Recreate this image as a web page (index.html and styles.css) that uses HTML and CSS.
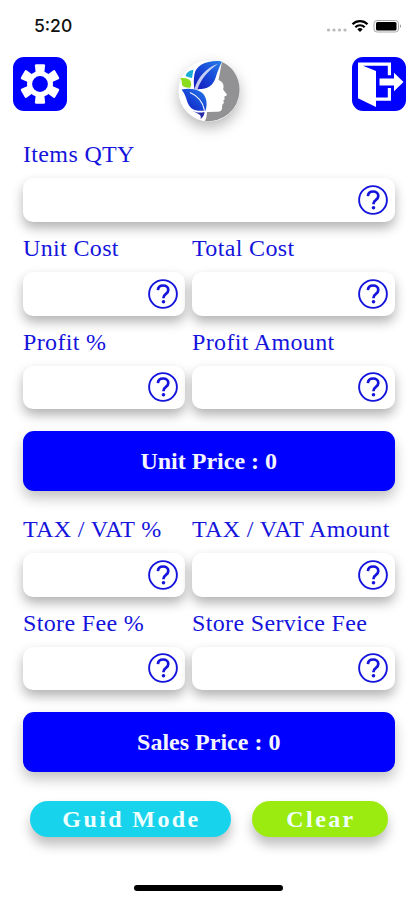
FILE: index.html
```
<!DOCTYPE html>
<html lang="en">
<head>
<meta charset="utf-8">
<meta name="viewport" content="width=device-width, initial-scale=1">
<title>Price Calculator</title>
<link rel="stylesheet" href="styles.css">
</head>
<body>
<svg class="defs" width="0" height="0" aria-hidden="true">
  <symbol id="help" viewBox="0 0 30 30">
    <circle cx="15" cy="15" r="13.9" fill="none" stroke="currentColor" stroke-width="1.9"/>
    <path d="M9.9 11.2C10.1 8.2 12 6.5 15.1 6.5c3 0 5.2 1.7 5.2 4.4 0 2-1.1 3.100-2.600 4.200-1.600 1.100-2.200 1.800-2.200 3.700v.5" fill="none" stroke="currentColor" stroke-width="2.700"/>
    <circle cx="15.500" cy="22.700" r="1.800" fill="currentColor"/>
  </symbol>
</svg>
<div class="status">
  <span class="time">5:20</span>
  <svg class="signals" width="76" height="18" viewBox="0 0 76 18">
    <g fill="#b8b8b8"><circle cx="2.500" cy="13" r="1.600"/><circle cx="8" cy="13" r="1.600"/><circle cx="13.500" cy="13" r="1.600"/><circle cx="19" cy="13" r="1.600"/></g>
    <g fill="none" stroke="#000" stroke-width="2.200"><path d="M26.500 7.200a10.500 10.500 0 0 1 15 0"/><path d="M29.300 10.200a6.600 6.600 0 0 1 9.400 0"/></g>
    <path d="M31.300 12.300a3.900 3.900 0 0 1 5.400 0L34 15z"/>
    <rect x="48" y="3.500" width="24.500" height="11.500" rx="3" fill="#fff" stroke="#aaa"/>
    <rect x="50" y="5" width="20.500" height="8.500" rx="1.500"/>
    <path d="M74 7.300q2 1.900 0 3.800z" fill="#888"/>
  </svg>
</div>
<header class="top">
  <div class="tile">
    <svg width="54" height="54" viewBox="0 0 54 54">
      <g fill="#fff">
        <circle cx="27" cy="27" r="13"/>
        <g id="teeth">
          <path id="tooth" d="M22.700 16 21.900 8.500q0-1.300 1.500-1.300h7.200q1.500 0 1.500 1.300L31.300 16z"/>
          <use href="#tooth" transform="rotate(60 27 27)"/><use href="#tooth" transform="rotate(120 27 27)"/>
          <use href="#tooth" transform="rotate(180 27 27)"/><use href="#tooth" transform="rotate(240 27 27)"/>
          <use href="#tooth" transform="rotate(300 27 27)"/>
        </g>
      </g>
      <circle cx="27" cy="27" r="7.900" fill="#00f"/>
    </svg>
  </div>
  <svg class="logo" width="64" height="64" viewBox="0 0 64 64">
    <defs><linearGradient id="leaf" x1="0" y1="1" x2="1" y2="0"><stop offset="0" stop-color="#1515b8"/><stop offset=".5" stop-color="#1748d8"/><stop offset="1" stop-color="#267de8"/></linearGradient></defs>
    <circle cx="32" cy="32" r="30.500" fill="#fff"/>
    <path d="M45 2.600A31 31 0 0 1 62.500 32 31 31 0 0 1 28 62q2-4 2-9l10-.200q4.500.200 5-3l.300-4 1.700-2-.800-2 1.500-1.500-.500-2.500 2.600-1.500c.8-1-2.500-3.500-3.700-6 1.500-4.500-.6-8-4.600-9.300z" fill="#929294"/>
    <path d="M45 2.200C30 .700 19 6 17.500 15c-1 6-.8 10.500-.1 15C29 31 35.500 28 38.500 19 40 14 42 9 45 2.200z" fill="url(#leaf)"/>
    <path d="M17.500 30C21 18 29 9 41 4.800 31 12 24 20 20.500 30.200z" fill="#fff" opacity=".75"/>
    <path d="M4.500 30.500C15 28.500 26 31 28.600 39c1.700 5 1 9 0 12.500-8 1.200-15-.5-17.600-7C9 39.500 8.300 35 4.500 30.500z" fill="url(#leaf)"/>
    <path d="M13 33.500c8 3.500 13 9.500 14.500 18" fill="none" stroke="#eef" stroke-width="1.300"/>
    <path d="M15 51.500c5 2.500 8.500 2.500 12.500 1.500q0 4-4 7 1.500-4-3-5.500z" fill="#252aa8"/>
    <path d="M3.500 19q8.500-.700 10.300 3.500 1 3.500-.500 6.300Q5 29 4.800 24.500 5 21.500 3.500 19z" fill="#8bdc1d"/>
    <path d="M8.500 17q1.500-5.500 8-6.200-.8 4-1.500 8.200-3.500-.5-6.500-2z" fill="#19abd8"/>
  </svg>
  <div class="tile">
    <svg width="54" height="54" viewBox="0 0 54 54">
      <path d="M6 5.500h33v12.800h-3.200V8.700H11L24 14v26.500h11.800v-9.600H39v12.800H24v6.300L6 41.300z" fill="#fff"/>
      <path d="M27.500 21.500H42v-5.700l9.500 9.200-9.500 9.200v-5.700H27.500z" fill="#fff"/>
    </svg>
  </div>
</header>
<main class="form">
  <label class="field"><span class="label qty">Items QTY</span><span class="box wide"><svg class="help"><use href="#help"/></svg></span></label>
  <div class="row">
    <label class="field"><span class="label">Unit Cost</span><span class="box"><svg class="help"><use href="#help"/></svg></span></label>
    <label class="field"><span class="label">Total Cost</span><span class="box"><svg class="help"><use href="#help"/></svg></span></label>
  </div>
  <div class="row">
    <label class="field"><span class="label">Profit %</span><span class="box"><svg class="help"><use href="#help"/></svg></span></label>
    <label class="field"><span class="label">Profit Amount</span><span class="box"><svg class="help"><use href="#help"/></svg></span></label>
  </div>
  <div class="total">Unit Price : 0</div>
  <div class="row">
    <label class="field"><span class="label tax">TAX / VAT %</span><span class="box"><svg class="help"><use href="#help"/></svg></span></label>
    <label class="field"><span class="label tax">TAX / VAT Amount</span><span class="box"><svg class="help"><use href="#help"/></svg></span></label>
  </div>
  <div class="row">
    <label class="field"><span class="label store">Store Fee %</span><span class="box"><svg class="help"><use href="#help"/></svg></span></label>
    <label class="field"><span class="label store">Store Service Fee</span><span class="box"><svg class="help"><use href="#help"/></svg></span></label>
  </div>
  <div class="total">Sales Price : 0</div>
</main>
<div class="actions">
  <button class="pill guide">Guid Mode</button>
  <button class="pill clear">Clear</button>
</div>
<div class="home"></div>
</body>
</html>
```
FILE: styles.css
```
* { box-sizing: border-box; }
body {
  margin: 0;
  height: 900px;
  overflow: hidden;
  background: #fff;
  font-family: "Liberation Serif", "Times New Roman", serif;
  color: #1414dc;
}
.defs { display: block; }
.status {
  height: 57px;
  padding: 15px 15px 0 34px;
  display: flex;
  justify-content: space-between;
  align-items: flex-start;
}
.time {
  font: 500 17.5px/22px Inter, sans-serif;
  color: #111;
}
.signals { margin-top: 2px; }
.top {
  height: 71px;
  padding: 0 11.500px 0 12.500px;
  display: flex;
  justify-content: space-between;
  align-items: flex-start;
}
.tile {
  width: 54px;
  height: 54px;
  border-radius: 11px;
  background: #00f;
}
.tile svg { display: block; }
.logo {
  margin-top: 2px;
  border-radius: 50%;
  filter: drop-shadow(0 6px 7px rgba(0, 0, 0, .28));
}
.form { padding: 0 22.500px 0 23px; }
.row {
  display: grid;
  grid-template-columns: 162px 1fr;
  column-gap: 7px;
}
.field { display: block; }
.label {
  display: block;
  height: 50px;
  padding-top: 1px;
  font-size: 24px;
  line-height: 50px;
  letter-spacing: .35px;
  white-space: nowrap;
}
.box {
  display: flex;
  justify-content: flex-end;
  align-items: center;
  height: 43.750px;
  padding-right: 7px;
  border-radius: 10px;
  background: #fff;
  box-shadow: 0 6px 12px rgba(0, 0, 0, .3);
}
.help { width: 30px; height: 30px; }
.total {
  height: 60px;
  margin: 22px 0 11.500px;
  border-radius: 11px;
  background: #00f;
  box-shadow: 0 7px 13px rgba(0, 0, 0, .24);
  color: #f4f4ff;
  font-size: 24px;
  font-weight: bold;
  line-height: 60px;
  text-align: center;
}
.actions {
  display: flex;
  justify-content: space-between;
  padding: 17.500px 29px 0 30px;
}
.pill {
  height: 36px;
  padding: 0 0 0 2px;
  border: 0;
  border-radius: 18px;
  font: bold 24px/34px "Liberation Serif", serif;
  letter-spacing: 2.400px;
  color: #efffff;
  box-shadow: 0 8px 12px rgba(0, 0, 0, .25);
}
.guide { width: 201px; background: #18d3ec; }
.clear { width: 136px; background: #9bea10; }
.home {
  width: 149px;
  height: 6px;
  margin: 48px auto 0;
  border-radius: 3px;
  background: #000;
}
```
